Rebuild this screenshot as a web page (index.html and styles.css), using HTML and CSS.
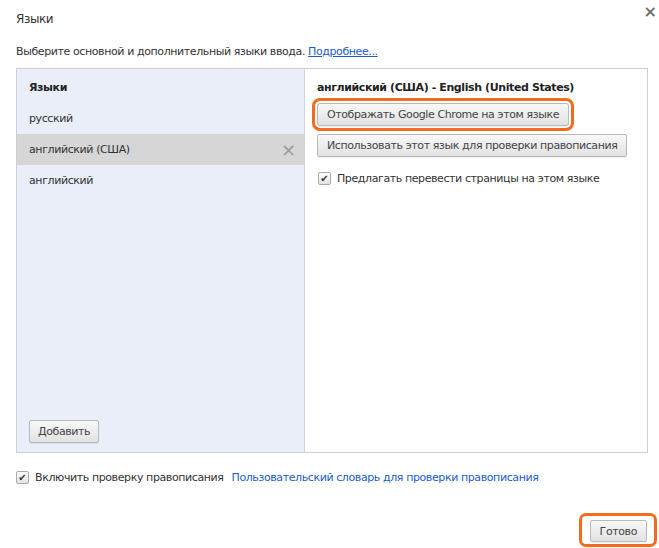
FILE: index.html
```html
<!DOCTYPE html>
<html lang="ru">
<head>
<meta charset="utf-8">
<title>Языки</title>
<link rel="stylesheet" href="styles.css">
</head>
<body>
<div class="dialog">
  <div class="titlebar">
    <span class="title">Языки</span>
    <span class="close">×</span>
  </div>
  <div class="desc">Выберите основной и дополнительный языки ввода. <a class="link" href="#">Подробнее...</a></div>
  <div class="panel">
    <div class="left">
      <div class="list">
        <div class="row head">Языки</div>
        <div class="row">русский</div>
        <div class="row selected"><span>английский (США)</span><span class="remove">×</span></div>
        <div class="row">английский</div>
      </div>
      <div class="left-foot"><button class="btn">Добавить</button></div>
    </div>
    <div class="right">
      <div class="rhead">английский (США) - English (United States)</div>
      <button class="btn wide highlight">Отображать Google Chrome на этом языке</button>
      <button class="btn wide">Использовать этот язык для проверки правописания</button>
      <label class="check"><span class="box">&#10004;</span>Предлагать перевести страницы на этом языке</label>
    </div>
  </div>
  <div class="spell">
    <label class="check"><span class="box">&#10004;</span>Включить проверку правописания</label>
    <a class="link" href="#">Пользовательский словарь для проверки правописания</a>
  </div>
  <div class="footer">
    <span class="ring"><button class="btn done">Готово</button></span>
  </div>
</div>
</body>
</html>
```

FILE: styles.css
```css
html, body {
  margin: 0;
  padding: 0;
  background: #fff;
}
body {
  width: 659px;
  height: 548px;
  overflow: hidden;
  font-family: "DejaVu Sans", Verdana, sans-serif;
  font-size: 11px;
  letter-spacing: -0.4px;
  color: #222;
}
.dialog {
  padding: 0 11px 0 16px;
}
.titlebar {
  display: flex;
  justify-content: space-between;
  align-items: flex-start;
  height: 42px;
}
.title {
  margin-top: 12px;
  font-size: 12px;
  color: #333;
}
.close {
  margin-top: 2px;
  margin-right: -9px;
  font-size: 16px;
  font-weight: bold;
  color: #6f6f6f;
  line-height: 20px;
  letter-spacing: 0;
}
.desc {
  height: 20px;
  line-height: 20px;
  margin-bottom: 6px;
  color: #333;
}
.link {
  color: #1a5bd0;
  text-decoration: none;
}
.desc .link {
  text-decoration: underline;
}
.panel {
  display: grid;
  grid-template-columns: 288px 1fr;
  height: 383px;
  border: 1px solid #cfcfcf;
}
.left {
  background: #e9eef9;
  border-right: 1px solid #d4d4d4;
  display: flex;
  flex-direction: column;
  justify-content: space-between;
  padding-top: 3px;
}
.row {
  height: 31px;
  line-height: 31px;
  padding: 0 8px 0 12px;
  display: flex;
  justify-content: space-between;
  color: #333;
}
.row.head {
  font-weight: bold;
  color: #222;
}
.row.selected {
  background: #d6d6d6;
}
.remove {
  font-size: 18px;
  color: #999;
  letter-spacing: 0;
}
.left-foot {
  padding: 0 0 9px 12px;
}
.btn {
  font-family: inherit;
  font-size: 11px;
  letter-spacing: -0.4px;
  color: #444;
  height: 23px;
  padding: 0 8px;
  border: 1px solid #b9b9b9;
  border-radius: 2px;
  background: linear-gradient(#f8f8f8, #e2e2e2);
  box-shadow: 0 1px 0 rgba(0,0,0,0.06);
  white-space: nowrap;
  cursor: default;
}
.right {
  display: flex;
  flex-direction: column;
  align-items: flex-start;
  padding: 3px 12px 0 12px;
}
.rhead {
  height: 31px;
  line-height: 31px;
  font-weight: bold;
  color: #222;
}
.btn.wide {
  margin-bottom: 8px;
  padding: 0 9px;
}
.btn.highlight {
  outline: 3px solid #f36b1c;
  outline-offset: 2px;
  border-radius: 3px;
}
.check {
  display: flex;
  align-items: center;
  gap: 6px;
  color: #333;
}
.right .check {
  margin-top: 7px;
  margin-left: 1px;
}
.box {
  width: 11px;
  height: 11px;
  border: 1px solid #a9a9a9;
  border-radius: 2px;
  background: linear-gradient(#fdfdfd, #e4e4e4);
  font-size: 10px;
  line-height: 11px;
  text-align: center;
  color: #333;
  letter-spacing: 0;
}
.spell {
  display: flex;
  align-items: center;
  gap: 8px;
  margin-top: 17px;
  height: 14px;
}
.footer {
  display: flex;
  justify-content: flex-end;
  margin-top: 29px;
  margin-right: -9px;
}
.ring {
  display: inline-block;
  border: 3px solid #f36b1c;
  border-radius: 7px;
  padding: 4px 7px 2px 8px;
}
.btn.done {
  height: 22px;
  padding: 0 9px;
}
```
